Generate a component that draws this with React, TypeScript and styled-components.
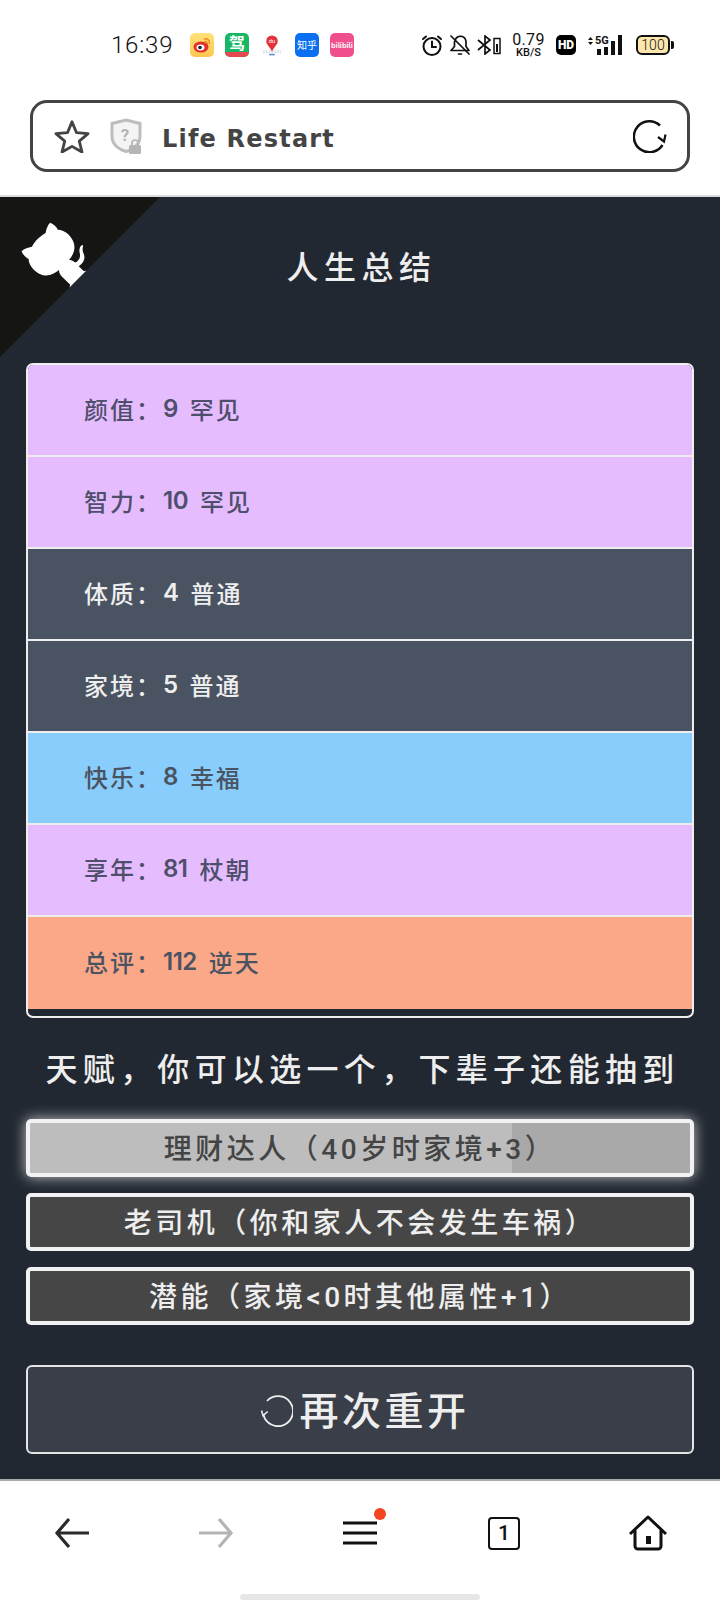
import React from 'react';
import styled, {createGlobalStyle} from 'styled-components';

const cjk = `"Noto Sans CJK SC", "Liberation Sans", sans-serif`;

const GlobalStyle = createGlobalStyle`
  html, body {
    margin: 0;
    padding: 0;
    background: #fff;
  }
  * {
    box-sizing: border-box;
  }
`;

const Screen = styled.div`
  width: 720px;
  height: 1600px;
  display: flex;
  flex-direction: column;
  overflow: hidden;
  font-family: ${cjk};
`;

/* status bar */
const StatusBar = styled.div`
  height: 90px;
  padding: 0 46px 0 111px;
  display: flex;
  align-items: center;
  color: #111;
`;
const Time = styled.span`
  font-family: Roboto, sans-serif;
  font-size: 24px;
  font-weight: 300;
  letter-spacing: 0.8px;
  width: 79px;
`;
const AppIcons = styled.div`
  display: flex;
  align-items: center;
  gap: 11px;
`;
const Tile = styled.div<{$bg: string}>`
  width: 24px;
  height: 24px;
  border-radius: 5px;
  background: ${props => props.$bg};
  color: #fff;
  display: flex;
  align-items: center;
  justify-content: center;
  position: relative;
  font-size: 10px;
  line-height: 1;
  white-space: nowrap;
`;
const TileStrip = styled.span`
  position: absolute;
  left: 0;
  right: 0;
  bottom: 0;
  height: 5px;
  border-radius: 0 0 5px 5px;
  background: #e5484d;
`;
const TileBig = styled.span`
  align-self: flex-start;
  font-size: 16px;
  line-height: 19px;
  font-weight: 700;
`;
const TileTiny = styled.span`
  font-size: 7px;
  font-weight: 700;
`;
const SysIcons = styled.div`
  margin-left: auto;
  display: flex;
  align-items: center;
`;
const IconSlot = styled.span<{$left?: number}>`
  display: flex;
  margin-left: ${props => props.$left ?? 0}px;
`;
const Speed = styled.div`
  width: 33px;
  margin: 0 11px 0 10px;
  display: flex;
  flex-direction: column;
  align-items: center;
  font-family: Roboto, sans-serif;
`;
const SpeedValue = styled.span`
  font-size: 16px;
  line-height: 15px;
  letter-spacing: 0.3px;
`;
const SpeedUnit = styled.span`
  font-size: 11px;
  line-height: 11px;
  font-weight: 500;
`;
const HdBadge = styled.span`
  width: 20px;
  height: 20px;
  border-radius: 5px;
  background: #000;
  color: #fff;
  font-family: Roboto, sans-serif;
  font-size: 12px;
  font-weight: 900;
  display: flex;
  align-items: center;
  justify-content: center;
`;
const Battery = styled.div`
  margin-left: 12px;
  width: 34px;
  height: 20px;
  border: 2px solid #111;
  border-radius: 6px;
  background: #fbe6ae;
  font-family: Roboto, sans-serif;
  font-size: 14px;
  font-weight: 300;
  line-height: 16px;
  text-align: center;
`;
const BatteryCap = styled.span`
  width: 3px;
  height: 8px;
  margin-left: 1px;
  background: #111;
  border-radius: 0 2px 2px 0;
`;

/* address bar */
const AddressWrap = styled.div`
  height: 105px;
  padding: 10px 30px 0;
`;
const AddressBar = styled.div`
  height: 72px;
  border: 3px solid #444;
  border-radius: 17px;
  padding: 0 20px 0 21px;
  display: flex;
  align-items: center;
`;
const PageTitle = styled.span`
  margin: 5px 0 0 19px;
  font-family: "DejaVu Sans", sans-serif;
  font-size: 24px;
  font-weight: 700;
  letter-spacing: 1.2px;
  color: #444;
`;
const Reload = styled.span`
  margin: 0 0 0 auto;
  display: flex;
`;

/* page */
const Page = styled.main`
  position: relative;
  flex: 1;
  background: #222831;
  border-top: 2px solid #dcdcdc;
  padding: 0 26px;
`;
const Corner = styled.svg`
  position: absolute;
  left: 0;
  top: 0;
  transform: scaleX(-1);
`;
const Title = styled.h1`
  margin: 0;
  height: 166px;
  padding: 46px 0 0 3px;
  text-align: center;
  font-size: 32px;
  line-height: 44px;
  font-weight: 500;
  letter-spacing: 5.5px;
  color: #eeeeee;
`;
const Summary = styled.ul`
  margin: 0;
  padding: 0 0 7px;
  list-style: none;
  height: 655px;
  border: 2px solid #eeeeee;
  border-radius: 7px;
  overflow: hidden;
`;
const gradeColors: Record<string, [string, string]> = {
  common: ['#4a5362', '#eeeeee'],
  good: ['#88cdfb', '#4a5362'],
  rare: ['#e5bdff', '#4f4e6b'],
  legend: ['#fba888', '#4a5362'],
};
const SummaryRow = styled.li<{$grade: string}>`
  height: 92px;
  padding: 0 0 4px 56px;
  border-bottom: 2px solid #eeeeee;
  display: flex;
  align-items: center;
  background: ${props => gradeColors[props.$grade][0]};
  color: ${props => gradeColors[props.$grade][1]};
  font-size: 24px;
  font-weight: 500;
  letter-spacing: 2px;
  &:last-child {
    border-bottom: 0;
  }
`;
const RowValue = styled.span`
  margin: 0 12px 0 1px;
  font-family: Inter, sans-serif;
  font-weight: 600;
  letter-spacing: -0.5px;
`;
const Heading = styled.h2`
  margin: 27px 0 30px;
  padding-left: 5px;
  text-align: center;
  font-size: 32px;
  line-height: 44px;
  font-weight: 500;
  letter-spacing: 5.3px;
  white-space: nowrap;
  color: #eeeeee;
`;
const Talents = styled.div`
  display: flex;
  flex-direction: column;
  gap: 16px;
`;
const Talent = styled.button<{$selected?: boolean}>`
  height: 58px;
  padding: 0 0 2px;
  border: 4px solid #f2f2f2;
  border-radius: 5px;
  font-family: Roboto, ${cjk};
  font-size: 28px;
  font-weight: 500;
  letter-spacing: 3.5px;
  color: ${props => (props.$selected ? '#444444' : '#eeeeee')};
  background: ${props =>
    props.$selected
      ? 'linear-gradient(90deg, #bdbdbd 0 73%, #a9a9a9 73%)'
      : '#464646'};
  box-shadow: ${props => (props.$selected ? '0 0 14px rgba(255,255,255,.75)' : 'none')};
`;
const Restart = styled.button`
  width: 100%;
  height: 89px;
  margin-top: 40px;
  padding: 0 0 4px 11px;
  border: 2px solid #e4e4e4;
  border-radius: 6px;
  background: #393e48;
  color: #eeeeee;
  font-family: inherit;
  font-size: 39px;
  font-weight: 500;
  letter-spacing: 3.5px;
  display: flex;
  align-items: center;
  justify-content: center;
  gap: 6px;
`;
const RestartGlyph = styled.svg`
  margin-top: 6px;
`;

/* bottom bar */
const BottomBar = styled.footer`
  height: 121px;
  border-top: 2px solid #a9a9a9;
  display: flex;
  flex-direction: column;
  background: #fff;
`;
const NavRow = styled.nav`
  height: 113px;
  padding-bottom: 9px;
  display: grid;
  grid-template-columns: repeat(5, 1fr);
  align-items: center;
  justify-items: center;
`;
const NavItem = styled.span`
  position: relative;
  display: flex;
`;
const Dot = styled.span`
  position: absolute;
  right: -9px;
  top: -13px;
  width: 12px;
  height: 12px;
  border-radius: 50%;
  background: #f4451f;
`;
const TabCount = styled.span`
  width: 32px;
  height: 33px;
  border: 2px solid #111;
  border-radius: 4px;
  font-family: Roboto, sans-serif;
  font-size: 21px;
  font-weight: 500;
  line-height: 29px;
  text-align: center;
  color: #111;
`;
const HomePill = styled.div`
  width: 240px;
  height: 6px;
  margin: 0 auto;
  border-radius: 3px;
  background: #e6e6e6;
`;
const ArrowSvg = styled.svg<{$flip?: boolean}>`
  transform: ${props => (props.$flip ? 'scaleX(-1)' : 'none')};
`;

const rows = [
  {label: '颜值', value: '9', note: '罕见', grade: 'rare'},
  {label: '智力', value: '10', note: '罕见', grade: 'rare'},
  {label: '体质', value: '4', note: '普通', grade: 'common'},
  {label: '家境', value: '5', note: '普通', grade: 'common'},
  {label: '快乐', value: '8', note: '幸福', grade: 'good'},
  {label: '享年', value: '81', note: '杖朝', grade: 'rare'},
  {label: '总评', value: '112', note: '逆天', grade: 'legend'},
];

function WeiboIcon() {
  return (
    <svg width="18" height="16" viewBox="0 0 18 16">
      <ellipse cx="8" cy="10" rx="7.5" ry="5.5" fill="#e0312b" />
      <ellipse cx="7.5" cy="10.5" rx="4" ry="3" fill="#fff" />
      <circle cx="7" cy="10.5" r="1.8" fill="#222" />
      <path d="M11 2c3-1 6 1 5.5 5M11.5 4.5c2-.5 3 .8 2.8 2.5" stroke="#f08a1d" strokeWidth="1.4" fill="none" />
    </svg>
  );
}

function MapIcon() {
  return (
    <svg width="25" height="24" viewBox="0 0 25 24">
      <path d="M3 19h19" stroke="#dfe3e6" strokeWidth="3" strokeDasharray="2 1" />
      <path d="M12.5 2a6 6 0 0 1 6 6c0 3.500-4 6-6 11-2-5-6-7.500-6-11a6 6 0 0 1 6-6z" fill="#e5323a" />
      <path d="M9.500 22h6" stroke="#5b8fd0" strokeWidth="1.600" />
      <text x="12.500" y="10" fontSize="6" fill="#fff" textAnchor="middle" fontFamily="Roboto">du</text>
    </svg>
  );
}

function AlarmIcon() {
  return (
    <svg width="22" height="22" viewBox="0 0 22 22" fill="none" stroke="#111" strokeWidth="2" strokeLinecap="round">
      <circle cx="11" cy="12.500" r="8.500" />
      <path d="M11 7.500v5.500h4M2 5l3-2.500M20 5l-3-2.500" />
    </svg>
  );
}

function BellOffIcon() {
  return (
    <svg width="22" height="22" viewBox="0 0 22 22" fill="none" stroke="#111" strokeWidth="1.700" strokeLinecap="round" strokeLinejoin="round">
      <path d="M6 7.500a5.500 5.500 0 0 1 10.500-2c.4 1 .5 2 .5 3v4l3 4H2l3.500-4V7.500z" />
      <path d="M2 2l18 18M9.500 20h3" />
    </svg>
  );
}

function BluetoothIcon() {
  return (
    <svg width="25" height="20" viewBox="0 0 25 20" fill="none" stroke="#111" strokeWidth="1.700">
      <path d="M1 5l12 10-5 4V1l5 4L1 15" />
      <rect x="17" y="3.500" width="6" height="15" strokeWidth="1.500" />
      <rect x="19" y="9" width="2" height="8" fill="#111" stroke="none" />
    </svg>
  );
}

function SignalIcon() {
  return (
    <svg width="39" height="22" viewBox="0 0 39 22">
      <path d="M3 6l2.500-3L8 6zM3 8l2.500 3L8 8z" fill="#111" />
      <text x="10" y="10" fontSize="11" fontWeight="700" fontFamily="Roboto" fill="#111">5G</text>
      <rect x="12" y="15" width="4" height="6" fill="#111" />
      <rect x="19" y="13" width="4" height="8" fill="#111" />
      <rect x="26" y="7" width="4" height="14" fill="#111" />
      <rect x="33" y="1" width="4" height="20" fill="#111" />
    </svg>
  );
}

function StarIcon() {
  return (
    <svg width="36" height="34" viewBox="0 0 38 36" fill="none" stroke="#444" strokeWidth="3" strokeLinejoin="round">
      <path d="M19 3l4.800 11.500 12.200 1-9.300 8 2.900 11.500L19 29l-10.600 6 2.900-11.500-9.300-8 12.200-1z" />
    </svg>
  );
}

function ShieldIcon() {
  return (
    <svg width="33" height="36" viewBox="0 0 33 36">
      <path d="M16 2l14 3.500V18c0 8-6 13-14 15.500C8 31 2 26 2 18V5.500z" fill="#f4f4f4" stroke="#bdbdbd" strokeWidth="3" />
      <text x="15" y="23" fontSize="17" fontFamily="Roboto" fontWeight="700" fill="#b5b5b5" textAnchor="middle">?</text>
      <rect x="19" y="27" width="12" height="9" rx="1.500" fill="#b5b5b5" />
      <path d="M22 27v-2a3 3 0 0 1 6 0v2" fill="none" stroke="#b5b5b5" strokeWidth="1.700" />
    </svg>
  );
}

function ReloadIcon() {
  return (
    <svg width="34" height="34" viewBox="0 0 34 34" fill="none" stroke="#111" strokeWidth="2.500">
      <path d="M29.500 26a15.500 15.500 0 1 1-2.500-19.500" />
      <path d="M25 18l6 4.500 1.500-7" strokeWidth="2.200" />
    </svg>
  );
}

function RestartIcon() {
  return (
    <RestartGlyph width="32" height="32" viewBox="0 0 32 32" fill="none" stroke="#eeeeee" strokeWidth="1.800">
      <path d="M6 6a15 15 0 1 1-3.500 14" />
      <path d="M.5 15.500L2 20.500l4.700-4" strokeWidth="1.600" />
    </RestartGlyph>
  );
}

function ArrowIcon({color, flip}: {color: string; flip?: boolean}) {
  return (
    <ArrowSvg $flip={flip} width="36" height="36" viewBox="0 0 36 36" fill="none" stroke={color} strokeWidth="3.200">
      <path d="M35 18H3M15 4L3 18l12 14" />
    </ArrowSvg>
  );
}

function MenuIcon() {
  return (
    <svg width="34" height="24" viewBox="0 0 34 24" stroke="#111" strokeWidth="3">
      <path d="M0 2h34M0 12h34M0 22h34" />
    </svg>
  );
}

function HomeIcon() {
  return (
    <svg width="40" height="36" viewBox="0 0 40 36" fill="none" stroke="#111" strokeWidth="3" strokeLinejoin="round">
      <path d="M2 19L20 2l18 17M7 15v16a3 3 0 0 0 3 3h20a3 3 0 0 0 3-3V15" />
      <rect x="18" y="21" width="5" height="8" fill="#111" stroke="none" />
    </svg>
  );
}

function App() {
  return (
    <Screen>
      <GlobalStyle />
      <StatusBar>
        <Time>16:39</Time>
        <AppIcons>
          <Tile $bg="linear-gradient(#ffe27a, #fcc64f)">
            <WeiboIcon />
          </Tile>
          <Tile $bg="#18b765">
            <TileBig>驾</TileBig>
            <TileStrip />
          </Tile>
          <Tile $bg="transparent">
            <MapIcon />
          </Tile>
          <Tile $bg="#0b6ff2">知乎</Tile>
          <Tile $bg="#f04f8d">
            <TileTiny>bilibili</TileTiny>
          </Tile>
        </AppIcons>
        <SysIcons>
          <AlarmIcon />
          <IconSlot $left={6}>
            <BellOffIcon />
          </IconSlot>
          <IconSlot $left={6}>
            <BluetoothIcon />
          </IconSlot>
          <Speed>
            <SpeedValue>0.79</SpeedValue>
            <SpeedUnit>KB/S</SpeedUnit>
          </Speed>
          <HdBadge>HD</HdBadge>
          <IconSlot $left={9}>
            <SignalIcon />
          </IconSlot>
          <Battery>100</Battery>
          <BatteryCap />
        </SysIcons>
      </StatusBar>
      <AddressWrap>
        <AddressBar>
          <StarIcon />
          <IconSlot $left={20}>
            <ShieldIcon />
          </IconSlot>
          <PageTitle>Life Restart</PageTitle>
          <Reload>
            <ReloadIcon />
          </Reload>
        </AddressBar>
      </AddressWrap>
      <Page>
        <Corner width="160" height="160" viewBox="0 0 250 250">
          <path d="M0,0 L250,250 L250,0 Z" fill="#151513" />
          <path
            d="M128.3,109.0 C113.8,99.7 119.0,89.6 119.0,89.6 C122.0,82.7 120.5,78.6 120.5,78.6 C119.2,72.0 123.4,76.3 123.4,76.3 C127.3,80.9 125.5,87.3 125.5,87.3 C122.9,97.6 130.6,101.9 134.4,103.2"
            fill="#fff"
          />
          <path
            d="M115.0,115.0 C114.9,115.1 118.7,116.5 119.8,115.4 L133.7,101.6 C136.9,99.2 139.9,98.4 142.2,98.6 C133.8,88.0 127.5,74.4 143.8,58.0 C148.5,53.4 154.0,51.2 159.7,51.0 C160.3,49.4 163.2,43.6 171.4,40.1 C171.4,40.1 176.1,42.5 178.8,56.2 C183.1,58.6 187.2,61.8 190.9,65.4 C194.5,69.0 197.7,73.2 200.1,77.6 C213.8,80.2 216.3,84.9 216.3,84.9 C212.7,93.1 206.9,96.0 205.4,96.6 C205.1,102.4 203.0,107.8 198.3,112.5 C181.9,128.9 168.3,122.5 157.7,114.1 C157.9,116.9 156.7,120.9 152.7,124.9 L141.0,136.5 C139.8,137.7 141.6,141.9 141.8,141.8 Z"
            fill="#fff"
          />
        </Corner>
        <Title>人生总结</Title>
        <Summary>
          {rows.map(row => (
            <SummaryRow key={row.label} $grade={row.grade}>
              {row.label}：<RowValue>{row.value}</RowValue>
              {row.note}
            </SummaryRow>
          ))}
        </Summary>
        <Heading>天赋，你可以选一个，下辈子还能抽到</Heading>
        <Talents>
          <Talent $selected>理财达人（40岁时家境+3）</Talent>
          <Talent>老司机（你和家人不会发生车祸）</Talent>
          <Talent>潜能（家境&lt;0时其他属性+1）</Talent>
        </Talents>
        <Restart>
          <RestartIcon />
          再次重开
        </Restart>
      </Page>
      <BottomBar>
        <NavRow>
          <NavItem>
            <ArrowIcon color="#2b2b2b" />
          </NavItem>
          <NavItem>
            <ArrowIcon color="#b4b4b4" flip />
          </NavItem>
          <NavItem>
            <MenuIcon />
            <Dot />
          </NavItem>
          <NavItem>
            <TabCount>1</TabCount>
          </NavItem>
          <NavItem>
            <HomeIcon />
          </NavItem>
        </NavRow>
        <HomePill />
      </BottomBar>
    </Screen>
  );
}

export default App;
